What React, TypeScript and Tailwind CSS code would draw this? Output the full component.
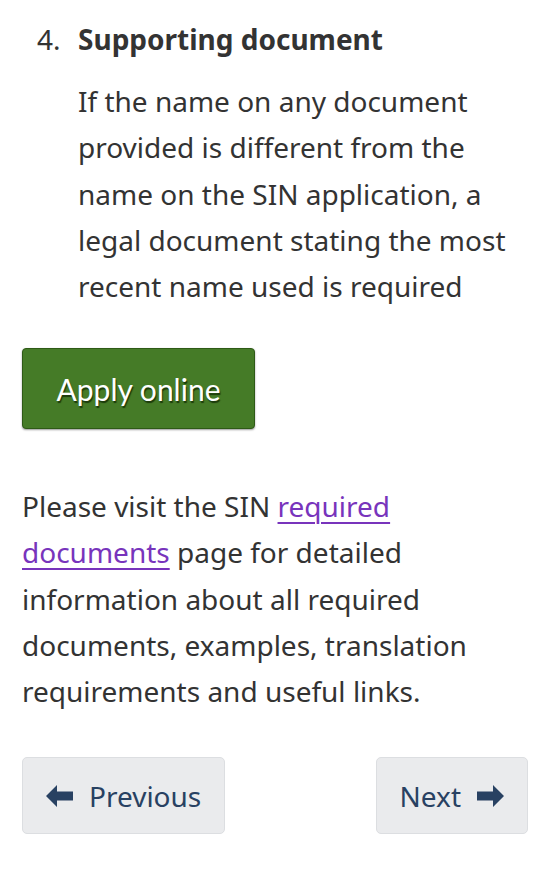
import { ReactNode } from 'react';

function Arrow({ dir }: { dir: 'left' | 'right' }) {
    return (
        <svg width="27" height="22" viewBox="0 0 27 22" className={dir === 'left' ? '' : 'rotate-180'}>
            <path d="M0 11 L11 0 L11 6.5 L27 6.5 L27 15.5 L11 15.5 L11 22 Z" fill="#284162" />
        </svg>
    );
}

function NavButton({ children }: { children: ReactNode }) {
    return (
        <button className="h-[77px] px-[23px] flex items-center gap-[16px] bg-[#eaebed] border border-[#dcdee1] rounded-[5px] text-[28px] text-[#284162]">
            {children}
        </button>
    );
}

export default function App() {
    return (
        <div className="px-[22px] pt-[16px] pb-[62px] bg-white text-[#333] text-[28px] leading-[46.2px] font-['Noto_Sans',sans-serif]">
            {/* numbered step */}
            <div className="flex">
                <span className="w-[56px] pl-[15px] shrink-0">4.</span>
                <div>
                    <h3 className="font-bold">Supporting document</h3>
                    <p className="mt-[16px]">
                        If the name on any document provided is different from the name on the SIN application, a legal
                        document stating the most recent name used is required
                    </p>
                </div>
            </div>

            <div className="mt-[39px]">
                <a
                    href="#"
                    className="inline-flex items-center justify-center w-[233px] h-[81px] bg-[#457b27] border border-[#2e5a16] rounded-[4px] text-white text-[30px] font-['Lato',sans-serif] [text-shadow:1px_2px_1px_#1b3a0a] shadow-[0_1px_2px_rgba(0,0,0,0.4)]"
                >
                    Apply online
                </a>
            </div>

            <p className="mt-[54px]">
                Please visit the SIN{' '}
                <a href="#" className="text-[#7834bc] underline underline-offset-[5px] decoration-[1.5px]">
                    required documents
                </a>{' '}
                page for detailed information about all required documents, examples, translation requirements and
                useful links.
            </p>

            <div className="mt-[43px] flex justify-between">
                <NavButton>
                    <Arrow dir="left" />
                    Previous
                </NavButton>
                <NavButton>
                    Next
                    <Arrow dir="right" />
                </NavButton>
            </div>
        </div>
    );
}
